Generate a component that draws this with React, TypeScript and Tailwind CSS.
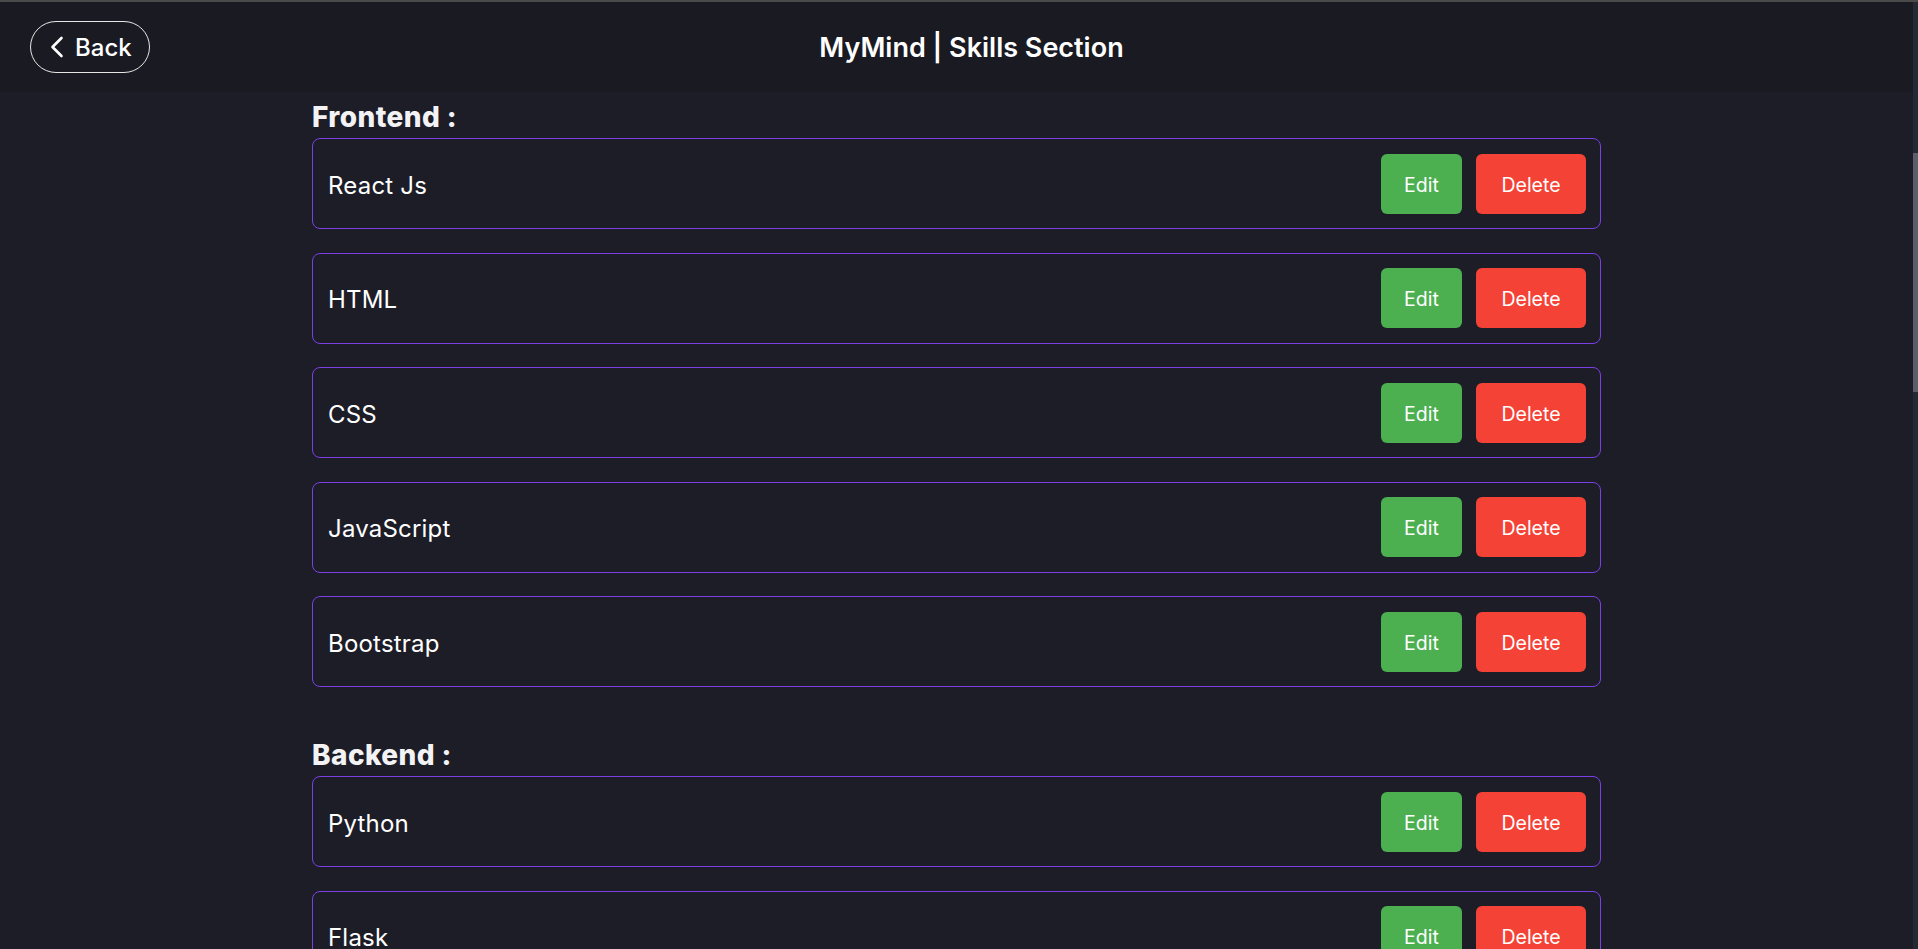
import React from 'react';

const frontend = ['React Js', 'HTML', 'CSS', 'JavaScript', 'Bootstrap'];
const backend = ['Python', 'Flask'];

const font = { fontFamily: 'Inter, "Open Sans", sans-serif' };

function SkillRow({ name }: { name: string }) {
  return (
    <div className="flex h-[91px] items-center justify-between rounded-lg border border-[#7b3fe4] pl-[15px] pr-[14px]">
      <span className="pt-[4px] text-[24px] tracking-[0.2px] text-white">{name}</span>
      <div className="flex gap-[14px]">
        <button className="h-[60px] w-[81px] rounded-md bg-[#4caf50] pt-[4px] text-[19.5px] text-white">
          Edit
        </button>
        <button className="h-[60px] w-[110px] rounded-md bg-[#f44336] pt-[4px] text-[19.5px] text-white">
          Delete
        </button>
      </div>
    </div>
  );
}

function Section({ title, items, className }: { title: string; items: string[]; className: string }) {
  return (
    <div className={className}>
      <h2 className="mb-[3px] pt-[1px] text-[28px] font-extrabold leading-[36px] tracking-[0.4px] text-[#f3f3f5]">
        {title}
      </h2>
      <div className="flex flex-col gap-[23.5px]">
        {items.map((item) => (
          <SkillRow key={item} name={item} />
        ))}
      </div>
    </div>
  );
}

export default function App() {
  return (
    <div className="flex h-[949px] flex-col overflow-hidden bg-[#1d1d27]" style={font}>
      <div className="h-[2px] bg-[#4a4a4a]" />
      <div className="flex flex-1 overflow-hidden">
        <div className="flex-1 overflow-hidden">
          <header className="flex h-[90px] items-center bg-[#1a1a22] pl-[30px] pr-[120px]">
            <button className="flex h-[52px] w-[120px] items-center gap-[11px] rounded-full border border-[#e6e6e6] pl-[19px] text-[24px] font-medium text-white">
              <svg width="14" height="22" viewBox="0 0 14 22" fill="none">
                <polyline
                  points="11.5,2 2.5,11 11.5,20"
                  stroke="white"
                  strokeWidth="2.6"
                  strokeLinecap="round"
                  strokeLinejoin="round"
                />
              </svg>
              <span className="pt-[2px]">Back</span>
            </button>
            <h1 className="flex-1 pt-[2px] text-center text-[27px] font-semibold text-white">MyMind | Skills Section</h1>
          </header>

          <div className="mx-auto w-[1289px]">
            <Section title="Frontend :" items={frontend} className="pt-[6px]" />
            <Section title="Backend :" items={backend} className="mt-[49px]" />
          </div>
        </div>

        <div className="flex w-[5px] flex-col bg-[#232a36]">
          <div className="h-[151px]" />
          <div className="h-[239px] bg-[#5b5f6b]" />
        </div>
      </div>
    </div>
  );
}
